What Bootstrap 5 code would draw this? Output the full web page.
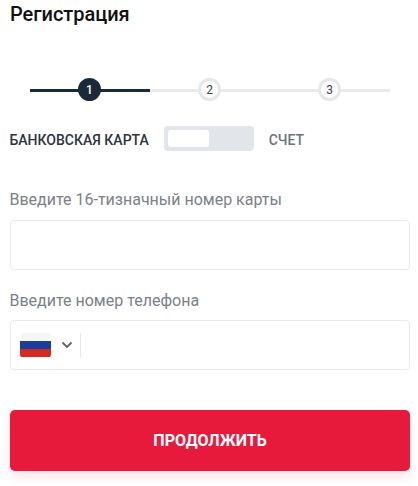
<!DOCTYPE html>
<html lang="ru">
<head>
<meta charset="utf-8">
<title>Регистрация</title>
<link rel="stylesheet" href="https://cdn.jsdelivr.net/npm/bootstrap@5.3.0/dist/css/bootstrap.min.css">
<style>
html, body { height: 100%; }
body { font-family: Roboto, "Liberation Sans", sans-serif; background: #fff; color: #14202e; overflow: hidden; }
.reg-wrap { padding: 3px 8px 0 10px; }
.reg-title { font-size: 20px; font-weight: 500; line-height: 22px; color: #111; margin: 0; letter-spacing: -.05px; }
.stepper { margin: 54px 20px 0 20px; height: 22px; }
.step-item { flex: 1 1 0; height: 22px; }
.step-item::before { content: ""; position: absolute; left: 0; right: 0; top: 9.5px; height: 3px; background: #e9eaec; }
.step-item.active::before { background: #1b2a3a; }
.step-dot { position: relative; width: 23px; height: 23px; margin-left: -1px; margin-top: -1px; font-size: 12px; line-height: 1; background: #fff; color: #3a4450; border: 3px solid #e6e7e9; }
.step-item.active .step-dot { background: #1b2a3a; border-color: #1b2a3a; color: #fff; font-weight: 500; }
.switch-row { margin-top: 25px; height: 25px; }
.switch-label { font-size: 14px; font-weight: 500; line-height: 1; padding-top: 2px; color: #2b3440; margin-left: -.5px; }
.switch-label.off { color: #6d747c; margin-left: 15px; }
.switch-track { width: 90px; height: 25px; margin-left: 15px; padding: 4px; background: #e2e5e9; border-radius: 4px; }
.switch-knob { width: 41px; height: 17px; background: #fff; border-radius: 3px; }
.field-label { font-size: 16px; line-height: 20px; color: #7b8187; margin: 0 0 10px -.5px; display: block; }
.field-one { margin-top: 39px; }
.field-two { margin-top: 21px; }
.field-box { width: 400px; height: 50px; border: 1px solid #e9eaec; border-radius: 4px; background: #fff; box-shadow: none; }
.field-two .field-label { margin-bottom: 9px; }
.phone-box { padding-left: 9px; }
.flag { width: 31px; height: 25px; border-radius: 4px; overflow: hidden; }
.flag i { display: block; flex: 1 1 0; }
.flag-w { background: #f6f6f7; }
.flag-b { background: #1c3d99; }
.flag-r { background: #d22c22; }
.chev { margin-left: 10px; }
.phone-sep { width: 1px; height: 25px; background: #e6e7e9; margin-left: 7px; }
.go-btn { width: 400px; height: 61px; margin-top: 40px; background: #e81a3b; border: 0; border-radius: 5px; color: #fff; font-size: 16px; font-weight: 700; box-shadow: 0 6px 12px rgba(233,26,59,.12); }
.go-btn:hover { background: #e81a3b; color: #fff; }
</style>
</head>
<body>
<main class="reg-wrap">
  <h1 class="reg-title">Регистрация</h1>

  <div class="stepper d-flex">
    <div class="step-item active position-relative d-flex justify-content-center">
      <span class="step-dot rounded-circle d-flex align-items-center justify-content-center">1</span>
    </div>
    <div class="step-item position-relative d-flex justify-content-center">
      <span class="step-dot rounded-circle d-flex align-items-center justify-content-center">2</span>
    </div>
    <div class="step-item position-relative d-flex justify-content-center">
      <span class="step-dot rounded-circle d-flex align-items-center justify-content-center">3</span>
    </div>
  </div>

  <div class="switch-row d-flex align-items-center">
    <span class="switch-label">БАНКОВСКАЯ КАРТА</span>
    <span class="switch-track d-block"><span class="switch-knob d-block"></span></span>
    <span class="switch-label off">СЧЕТ</span>
  </div>

  <form>
    <div class="field-one">
      <label class="field-label" for="card">Введите 16-тизначный номер карты</label>
      <input id="card" class="form-control field-box" type="text">
    </div>
    <div class="field-two">
      <label class="field-label" for="phone">Введите номер телефона</label>
      <div class="field-box phone-box d-flex align-items-center">
        <span class="flag d-flex flex-column"><i class="flag-w"></i><i class="flag-b"></i><i class="flag-r"></i></span>
        <svg class="chev" width="12" height="8" viewBox="0 0 12 8" fill="none" aria-hidden="true"><path d="M1.5 1.5 6 6l4.5-4.5" stroke="#5d646b" stroke-width="1.8"/></svg>
        <span class="phone-sep"></span>
      </div>
    </div>
    <button type="button" class="btn go-btn d-block">ПРОДОЛЖИТЬ</button>
  </form>
</main>
<script src="https://cdn.jsdelivr.net/npm/bootstrap@5.3.0/dist/js/bootstrap.bundle.min.js"></script>
</body>
</html>
